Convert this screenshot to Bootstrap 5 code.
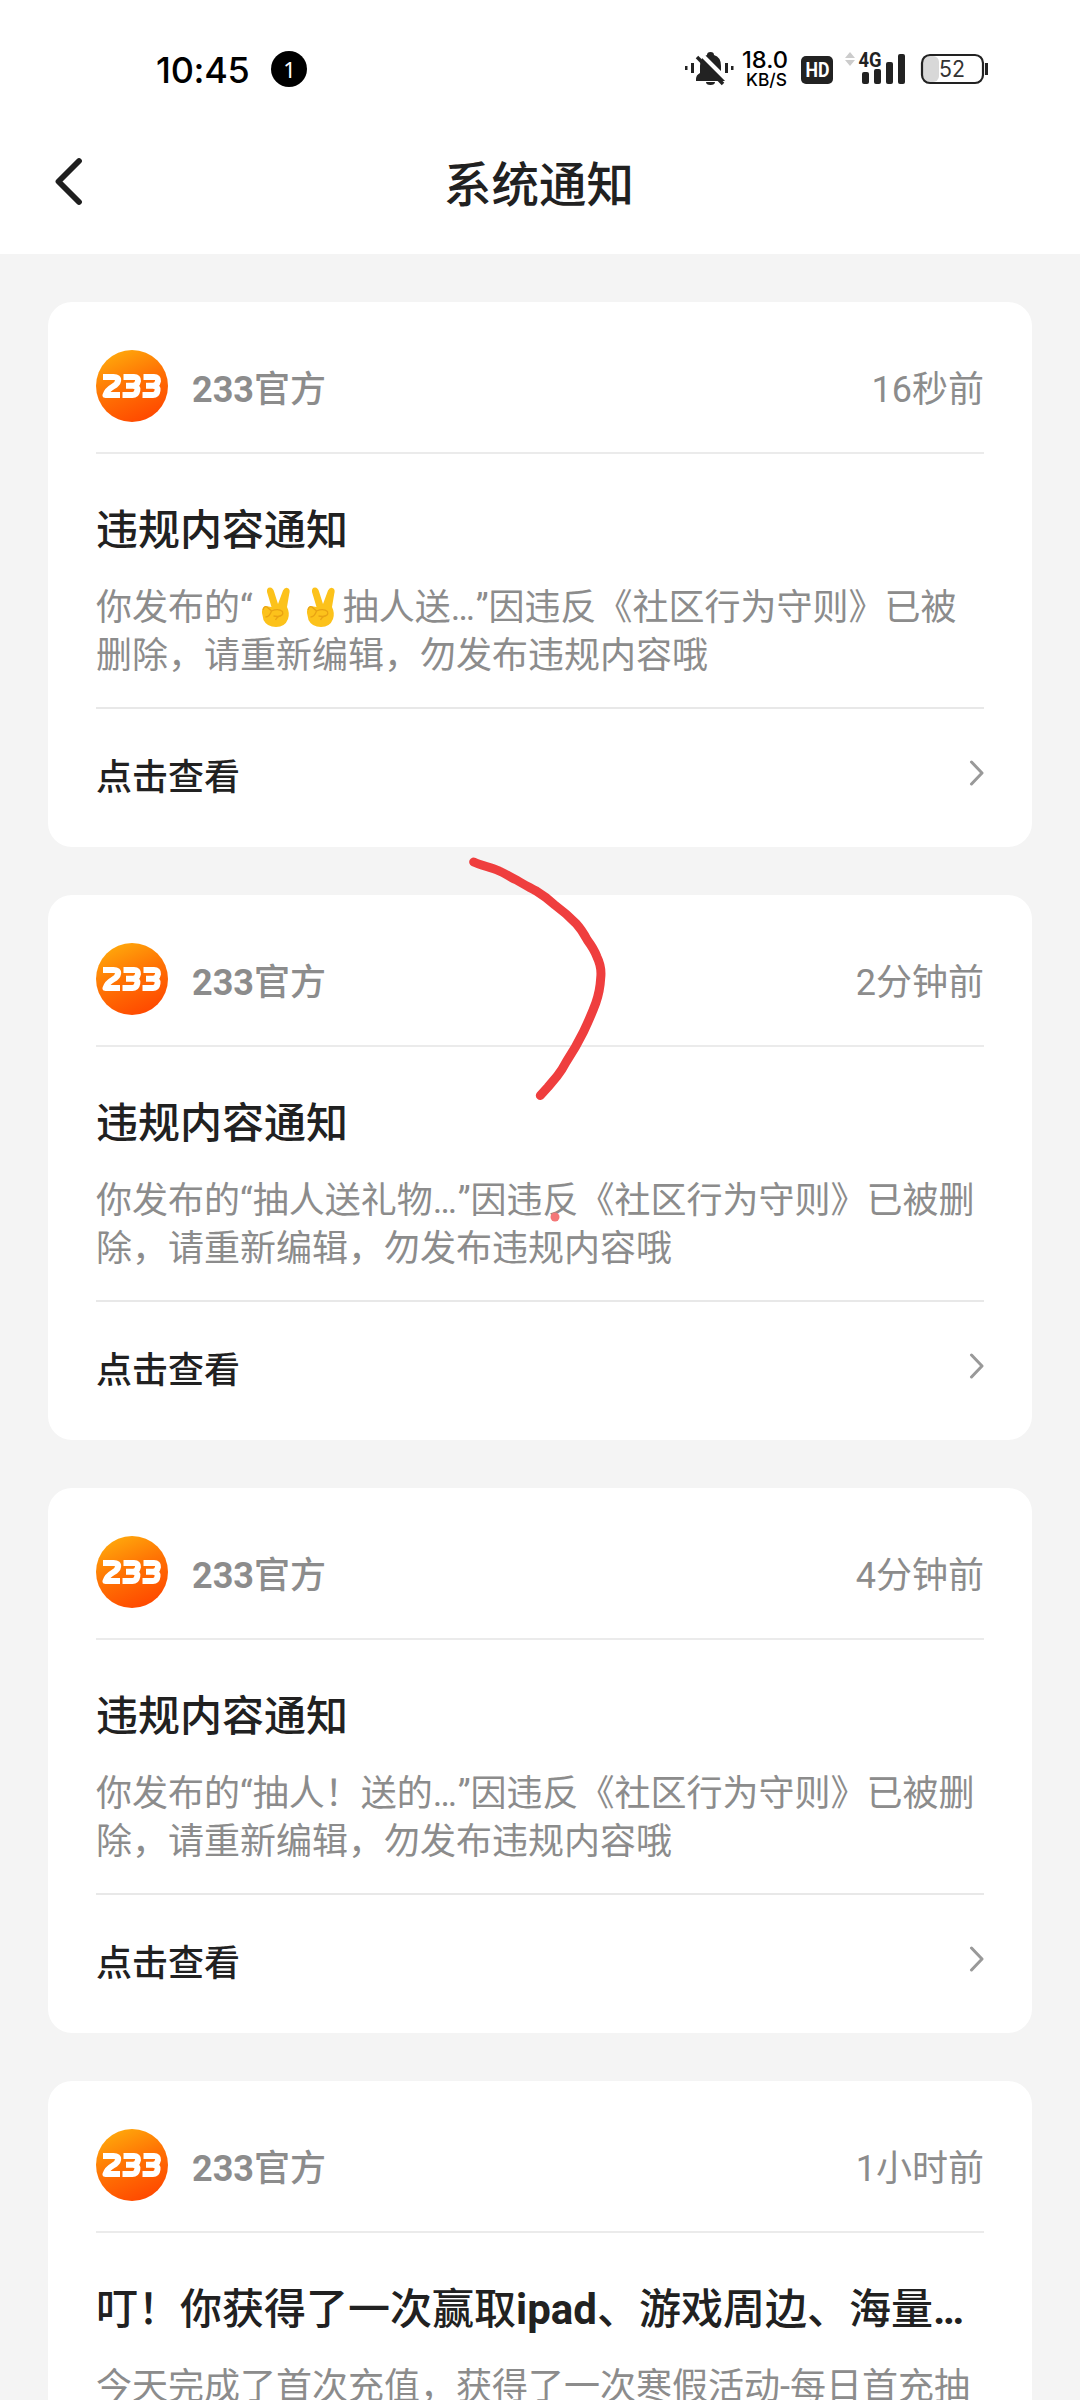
<!DOCTYPE html>
<html lang="zh-CN">
<head>
<meta charset="utf-8">
<meta name="viewport" content="width=device-width, initial-scale=1">
<title>系统通知</title>
<link href="https://cdn.jsdelivr.net/npm/bootstrap@5.3.0/dist/css/bootstrap.min.css" rel="stylesheet">
<style>
  body{font-family:Roboto,"Noto Sans CJK SC",sans-serif;background:#f4f4f4;color:#212121;text-spacing-trim:space-all}
  .screen{width:1080px;height:2400px}
  .topbar{height:254px}
  .statusbar{height:138px;padding:0 90px 0 156px;color:#000}
  .clock{font-family:Inter,sans-serif;font-size:36px;font-weight:500;letter-spacing:-.3px;line-height:1;padding-top:2px}
  .pill{width:36px;height:36px;margin-left:22px;background:#000;color:#fff;font:22px/36px "Noto Sans",sans-serif}
  .titlebar{height:116px;padding:0 47px 0 45px}
  .page-title{font-size:47.5px;font-weight:500;line-height:64px}
  .feed{padding:48px;gap:48px}
  .notice{--bs-card-border-radius:24px;height:545px;padding:0 48px;border:0;flex:none}
  .notice-head{height:152px;border-bottom:2px solid #ebebeb;padding-top:18px}
  .sender{font-size:36px;font-weight:500;line-height:48px;color:#8c8c8c;padding-top:7px}
  .digits{font-weight:700}
  .when{font-size:36px;line-height:48px;color:#8c8c8c;padding-top:7px}
  .notice-main{height:255px;border-bottom:2px solid #e8e8e8;padding-top:50px;white-space:nowrap}
  .notice-title{font-size:42px;font-weight:500;line-height:54px;margin:0 0 26px}
  .notice-text{font-size:36px;line-height:48px;color:#8c8c8c;margin:0}
  .dots{letter-spacing:.8px}
  .notice-foot{height:138px;font-size:36px;font-weight:500}
  .next-icon{margin-bottom:11px}
  .peace{width:45px;height:42px;vertical-align:-8px}
  .scribble{left:460px;top:850px}
</style>
</head>
<body>
<svg width="0" height="0" class="position-absolute">
  <defs>
    <linearGradient id="org" x1=".15" y1="0" x2=".6" y2="1"><stop offset="0" stop-color="#ffae0c"/><stop offset=".5" stop-color="#ff7404"/><stop offset="1" stop-color="#ff4a00"/></linearGradient>
    <symbol id="logo" viewBox="0 0 72 72">
      <circle cx="36" cy="36" r="36" fill="url(#org)"/>
      <g fill="none" stroke="#fff" stroke-width="6" stroke-linejoin="round">
        <path d="M7 27H17.500Q23 27 22 31Q21.500 34 17 36.500Q11 40 9.500 45H24"/>
        <path d="M27.500 27H38Q42.500 27 42 31Q41 35.700 37 35.700H30M37 35.700Q42 36 41.300 40.500Q40.500 45 36.500 45H26.500"/>
        <path d="M47.500 27H58Q62.500 27 62 31Q61 35.700 57 35.700H50M57 35.700Q62 36 61.500 40.500Q61 45 57 45H46.500"/>
      </g>
    </symbol>
    <symbol id="peace" viewBox="0 0 45 42">
      <g transform="translate(8.500 0)">
      <path d="M10 21L5.500 6Q5 1.500 8.500 1.500Q11.500 1.500 12.700 6L16.500 18L21.500 4.500Q23.500.8 26.500 2.200Q29 3.400 27.700 8L25.500 21Q28.500 27 26.500 33Q23.500 41 14.500 41Q5.500 41 2 34L.5 27Q.3 21.500 4 20Z" fill="#fcc21b"/>
      <path d="M1.500 24Q2.500 19.500 5.500 21L10 25Q17 22 21 25.500Q22.500 30 16 30.500L12 30M10 25Q8 31 4 31M14 34Q16 30 20 29.500" fill="none" stroke="#e9a313" stroke-width="1.300"/>
      </g>
    </symbol>
    <symbol id="next" viewBox="0 0 20 30"><path d="M7.500 4L18 15L7.500 26" fill="none" stroke="#999" stroke-width="3" stroke-linecap="round" stroke-linejoin="round"/></symbol>
  </defs>
</svg>
<div class="screen position-relative overflow-hidden d-flex flex-column">
  <header class="topbar bg-white flex-shrink-0">
    <div class="statusbar d-flex align-items-center">
      <span class="clock">10:45</span>
      <span class="pill rounded-circle text-center">1</span>
      <svg class="ms-auto mt-1" width="310" height="46" viewBox="0 0 310 46" role="img">
        <g fill="#222">
          <path d="M16 31Q16 27 20 25V18Q20 9 27 7Q27 4 30.500 4Q34 4 34 7Q41 9 41 18V25Q45 28 45 33H16ZM26 34H35Q35 37 30.500 37Q26 37 26 34Z"/>
          <path d="M5 18h2.500v4H5zM11 15h3v10h-3zM45 15h3v10h-3zM51 18h2.500v4H51z"/>
        </g>
        <path d="M21 6L47 32" stroke="#fff" stroke-width="4"/><path d="M17 9L43 36" stroke="#222" stroke-width="3.500"/>
        <g font-family="Inter,sans-serif" font-weight="500" fill="#000">
          <text x="62" y="19.500" font-size="22.500" textLength="46" lengthAdjust="spacingAndGlyphs">18.0</text>
          <text x="66" y="38" font-size="17.500" textLength="41" lengthAdjust="spacingAndGlyphs">KB/S</text>
        </g>
        <rect x="121" y="8" width="32" height="28" rx="5" fill="#222"/>
        <text x="125.500" y="29" font-family="Roboto,sans-serif" font-weight="700" font-size="20" fill="#fff" textLength="24" lengthAdjust="spacingAndGlyphs">HD</text>
        <path d="M165 10L170 4L175 10ZM165 12L170 18L175 12Z" fill="#ccc"/>
        <g fill="#222"><rect x="182" y="24" width="7" height="12" rx="2"/><rect x="194" y="21" width="7" height="15" rx="2"/><rect x="206" y="14" width="7" height="22" rx="2"/><rect x="218" y="6" width="7" height="30" rx="2"/></g>
        <text x="178.500" y="18.500" font-family="Roboto,sans-serif" font-weight="700" font-size="20" fill="#222" stroke="#fff" stroke-width="2" paint-order="stroke" textLength="23" lengthAdjust="spacingAndGlyphs">4G</text>
        <rect x="243" y="8" width="16" height="26" rx="6" fill="#d8d8d8"/>
        <rect x="242" y="7" width="61" height="28" rx="8" fill="none" stroke="#222" stroke-width="2.200"/>
        <rect x="305" y="15" width="3" height="12" fill="#222"/>
        <text x="259" y="29" font-family="Inter,sans-serif" font-size="22.500" fill="#333" textLength="26" lengthAdjust="spacingAndGlyphs">52</text>
      </svg>
    </div>
    <div class="titlebar row g-0">
      <div class="col pt-3"><svg width="44" height="56" viewBox="0 0 44 56"><path d="M34 7L13.500 27.500L34 48" fill="none" stroke="#1f1f1f" stroke-width="5.800" stroke-linecap="round" stroke-linejoin="round"/></svg></div>
      <h1 class="page-title col-auto mb-0 pt-3">系统通知</h1>
      <div class="col"></div>
    </div>
  </header>
  <main class="feed d-flex flex-column flex-grow-1">
    <article class="card notice">
      <div class="notice-head d-flex align-items-center"><svg width="72" height="72"><use href="#logo"/></svg><span class="sender ms-4"><span class="digits">233</span>官方</span><time class="when ms-auto">16秒前</time></div>
      <div class="notice-main"><h2 class="notice-title">违规内容通知</h2><p class="notice-text">你发布的“<svg class="peace"><use href="#peace"/></svg><svg class="peace"><use href="#peace"/></svg>抽人送<span class="dots">…</span>”因违反《社区行为守则》已被<br>删除，请重新编辑，勿发布违规内容哦</p></div>
      <div class="notice-foot d-flex align-items-center"><span>点击查看</span><svg class="next-icon ms-auto" width="20" height="30"><use href="#next"/></svg></div>
    </article>
    <article class="card notice">
      <div class="notice-head d-flex align-items-center"><svg width="72" height="72"><use href="#logo"/></svg><span class="sender ms-4"><span class="digits">233</span>官方</span><time class="when ms-auto">2分钟前</time></div>
      <div class="notice-main"><h2 class="notice-title">违规内容通知</h2><p class="notice-text">你发布的“抽人送礼物<span class="dots">…</span>”因违反《社区行为守则》已被删<br>除，请重新编辑，勿发布违规内容哦</p></div>
      <div class="notice-foot d-flex align-items-center"><span>点击查看</span><svg class="next-icon ms-auto" width="20" height="30"><use href="#next"/></svg></div>
    </article>
    <article class="card notice">
      <div class="notice-head d-flex align-items-center"><svg width="72" height="72"><use href="#logo"/></svg><span class="sender ms-4"><span class="digits">233</span>官方</span><time class="when ms-auto">4分钟前</time></div>
      <div class="notice-main"><h2 class="notice-title">违规内容通知</h2><p class="notice-text">你发布的“抽人！送的<span class="dots">…</span>”因违反《社区行为守则》已被删<br>除，请重新编辑，勿发布违规内容哦</p></div>
      <div class="notice-foot d-flex align-items-center"><span>点击查看</span><svg class="next-icon ms-auto" width="20" height="30"><use href="#next"/></svg></div>
    </article>
    <article class="card notice">
      <div class="notice-head d-flex align-items-center"><svg width="72" height="72"><use href="#logo"/></svg><span class="sender ms-4"><span class="digits">233</span>官方</span><time class="when ms-auto">1小时前</time></div>
      <div class="notice-main"><h2 class="notice-title">叮！你获得了一次赢取<span class="digits">ipad</span>、游戏周边、海量<span class="digits">…</span></h2><p class="notice-text">今天完成了首次充值，获得了一次寒假活动-每日首充抽</p></div>
    </article>
  </main>
  <svg class="scribble position-absolute" width="160" height="380" viewBox="460 850 160 380">
    <path d="M473.700 862C482 866 491 867 499.300 871C506 874 510 877 516.500 880C523 884 529 887 535.700 890.700Q546 897 554.800 905Q567 914 575.900 923.300Q582 930 587.300 940Q594 949 596.900 956.700Q602 967 600.700 978Q600 991 595.800 1003Q591 1016 583.500 1031.700Q576 1047 566.300 1061.700Q562 1070 556.700 1076.700L548 1087L540.300 1095.500" fill="none" stroke="#ef3e3e" stroke-width="9" stroke-linecap="round" stroke-linejoin="round"/>
    <circle cx="555" cy="1217" r="4.500" fill="#f47777"/>
  </svg>
</div>
<script src="https://cdn.jsdelivr.net/npm/bootstrap@5.3.0/dist/js/bootstrap.bundle.min.js"></script>
</body>
</html>
